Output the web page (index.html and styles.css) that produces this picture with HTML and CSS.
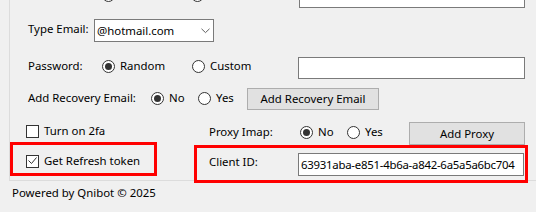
FILE: index.html
```html
<!DOCTYPE html>
<html>
<head>
<meta charset="utf-8">
<title>Qnibot</title>
<link rel="stylesheet" href="styles.css">
</head>
<body>
<div class="window">
  <div class="group">
    <div class="row r-top">
      <span class="lbl w-top"></span>
      <span class="opt w-t1"><span class="radio"></span></span>
      <span class="opt w-t2"><span class="radio"></span></span>
      <span class="lbl w-paren"></span>
      <span class="textbox tb-top"></span>
    </div>
    <div class="row r-type">
      <span class="lbl w-type">Type Email:</span>
      <div class="combo">
        <span class="combo-text">@hotmail.com</span>
        <svg class="chev" width="9" height="6" viewBox="0 0 9 6"><path d="M0.5 0.8 L4.5 4.6 L8.5 0.8" fill="none" stroke="#606060" stroke-width="1"/></svg>
      </div>
    </div>
    <div class="row r-pass">
      <span class="lbl w-pass">Password:</span>
      <span class="opt w-p1"><span class="radio on"></span><span>Random</span></span>
      <span class="opt w-p2"><span class="radio"></span><span>Custom</span></span>
      <span class="textbox tb-pass"></span>
    </div>
    <div class="row r-rec">
      <span class="lbl w-rec">Add Recovery Email:</span>
      <span class="opt w-r1"><span class="radio on"></span><span>No</span></span>
      <span class="opt w-r2"><span class="radio"></span><span>Yes</span></span>
      <span class="btn btn-rec">Add Recovery Email</span>
    </div>
    <div class="bottom">
      <div class="left-col">
        <div class="check c1"><span class="cb"></span><span>Turn on 2fa</span></div>
        <div class="check c2"><span class="cb"><svg width="11" height="11" viewBox="0 0 11 11"><path d="M1.5 4.5 L4.5 7.5 L9.5 1.5" fill="none" stroke="#333" stroke-width="1"/></svg></span><span>Get Refresh token</span></div>
      </div>
      <div class="right-col">
        <div class="row2 r-proxy">
          <span class="lbl w-proxy">Proxy Imap:</span>
          <span class="opt w-x1"><span class="radio on"></span><span>No</span></span>
          <span class="opt w-x2"><span class="radio"></span><span>Yes</span></span>
          <span class="btn btn-proxy">Add Proxy</span>
        </div>
        <div class="row2 r-client">
          <span class="lbl w-client">Client ID:</span>
          <span class="textbox tb-client">63931aba-e851-4b6a-a842-6a5a5a6bc704</span>
        </div>
      </div>
    </div>
  </div>
  <div class="footer">Powered by Qnibot © 2025</div>
  <div class="mark mark1"></div>
  <div class="mark mark2"></div>
</div>
</body>
</html>
```
FILE: styles.css
```css
* { box-sizing: border-box; }
body {
  margin: 0;
  background: #f0f0f0;
  font-family: "Noto Sans", "Segoe UI", sans-serif;
  font-size: 11.4px;
  line-height: 16px;
  color: #000;
}
.window { position: relative; width: 536px; height: 212px; overflow: hidden; }
.group {
  margin: -15px 0 0 9px;
  border-left: 1px solid #dcdcdc;
  border-bottom: 1px solid #dcdcdc;
  padding-bottom: 4px;
}
.row { display: flex; align-items: flex-start; padding-left: 18px; }
.row2 { display: flex; align-items: flex-start; }
.lbl { white-space: nowrap; flex: none; }
.opt { display: flex; align-items: center; height: 16px; flex: none; white-space: nowrap; }
.radio {
  width: 13px; height: 13px; border: 1px solid #333; border-radius: 50%;
  background: #fff; margin-right: 5px; display: flex; align-items: center; justify-content: center; flex: none;
}
.radio.on::after { content: ""; width: 7px; height: 7px; border-radius: 50%; background: #333; }
.textbox {
  background: #fff; border: 1px solid #7a7a7a; flex: none; white-space: nowrap;
}
.btn {
  background: #e1e1e1; border: 1px solid #adadad; display: flex; align-items: center; justify-content: center; flex: none; white-space: nowrap;
}

/* top (cropped) row */
.r-top { height: 23px; }
.r-top .lbl, .r-top .opt { margin-top: 2px; }
.w-top { width: 74px; height: 16px; }
.w-t1 { width: 89px; }
.w-t2 { width: 71px; }
.w-paren { width: 37px; height: 16px; }
.tb-top { width: 226px; height: 23px; }

/* type email */
.r-type { margin-top: 11px; height: 23px; }
.r-type .lbl { margin-top: 2px; }
.w-type { width: 66px; }
.combo {
  width: 120px; height: 23px; background: #fff; border: 1px solid #7a7a7a;
  display: flex; align-items: center; padding-left: 2px; flex: none;
}
.combo-text { flex: 1; }
.chev { margin-right: 3px; margin-top: 1px; }

/* password */
.r-pass { margin-top: 15px; height: 22px; }
.r-pass .lbl, .r-pass .opt { margin-top: 1px; }
.w-pass { width: 74px; }
.w-p1 { width: 90px; }
.w-p2 { width: 106px; }
.tb-pass { width: 227px; height: 22px; }

/* recovery */
.r-rec { margin-top: 9px; height: 22px; }
.r-rec .lbl, .r-rec .opt { margin-top: 2px; }
.w-rec { width: 123px; }
.w-r1 { width: 47px; }
.w-r2 { width: 49px; }
.btn-rec { width: 132px; height: 22px; }

/* bottom area */
.bottom { margin-top: 12px; display: flex; }
.left-col { width: 199px; padding: 1px 0 0 16px; }
.right-col { flex: 1; }
.check { display: flex; align-items: center; height: 16px; white-space: nowrap; }
.c2 { margin-top: 14px; }
.cb {
  width: 13px; height: 13px; border: 1px solid #333; background: #fff; margin-right: 5px; flex: none;
  display: flex; align-items: center; justify-content: center; margin-top: 1px;
}
.cb svg { display: block; }
.r-proxy { height: 23px; }
.r-proxy .lbl, .r-proxy .opt { margin-top: 2px; }
.w-proxy { width: 91px; }
.w-x1 { width: 47px; }
.w-x2 { width: 62px; }
.btn-proxy { width: 116px; height: 23px; }
.r-client { margin-top: 8px; height: 23px; }
.r-client .lbl { margin-top: 1px; }
.w-client { width: 89px; }
.tb-client { width: 226px; height: 23px; line-height: 21px; padding-left: 2px; letter-spacing: -0.25px; }

.footer { padding: 4px 0 0 12px; white-space: nowrap; }

.mark { position: absolute; border: 3px solid #f00; }
.mark1 { left: 10px; top: 142px; width: 147px; height: 34px; }
.mark2 { left: 194px; top: 145px; width: 334px; height: 38px; }
```
